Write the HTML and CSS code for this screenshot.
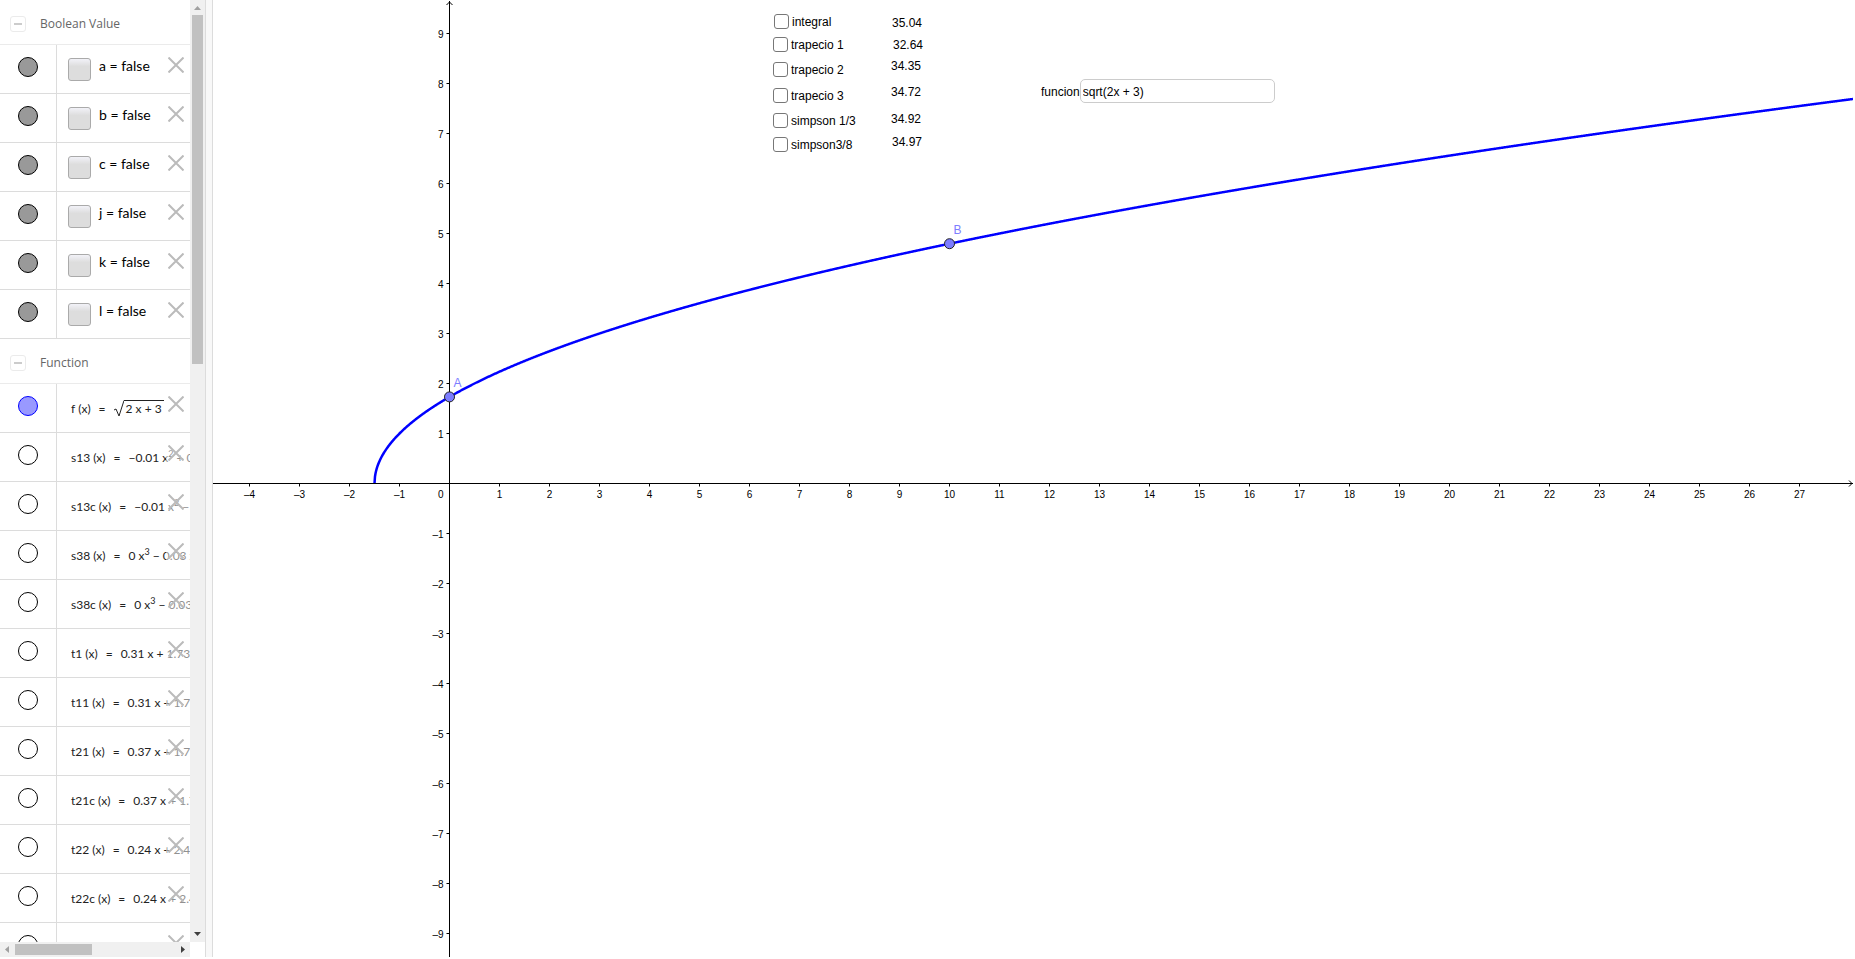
FILE: index.html
```html
<!DOCTYPE html>
<html lang="en">
<head>
  <meta charset="UTF-8">
  <meta name="viewport" content="width=device-width, initial-scale=1.0">
  <title>Integration methods</title>
  <link rel="stylesheet" href="styles.css">
</head>
<body>
  <div class="app">

    <!-- Algebra view -->
    <aside class="algebra">
      <div class="algebra-list">
        <section>
          <h2 class="group-title"><button type="button" class="collapse" aria-label="Collapse Boolean Value"></button>Boolean Value</h2>
          <ul class="rows" id="booleanRows"></ul>
        </section>
        <section>
          <h2 class="group-title"><button type="button" class="collapse" aria-label="Collapse Function"></button>Function</h2>
          <ul class="rows" id="functionRows"></ul>
        </section>
      </div>
      <div class="scroll scroll-y">
        <svg class="arrow" viewBox="0 0 15 15"><path d="M4 10h7L7.500 6z" fill="#a0a0a0"/></svg>
        <div class="thumb"></div>
        <svg class="arrow" viewBox="0 0 15 15"><path d="M4 5h7L7.500 9z" fill="#404040"/></svg>
      </div>
      <div class="scroll scroll-x">
        <svg class="arrow" viewBox="0 0 15 15"><path d="M9 4v7L5 7.500z" fill="#a0a0a0"/></svg>
        <div class="thumb"></div>
        <svg class="arrow" viewBox="0 0 15 15"><path d="M6 4v7L10 7.500z" fill="#404040"/></svg>
      </div>
    </aside>

    <div class="splitter"></div>

    <!-- Graphics view -->
    <main class="graphics">
      <svg class="plot" id="plot"></svg>

      <label class="check check-integral"><input type="checkbox">integral</label>
      <label class="check check-trapecio1"><input type="checkbox">trapecio 1</label>
      <label class="check check-trapecio2"><input type="checkbox">trapecio 2</label>
      <label class="check check-trapecio3"><input type="checkbox">trapecio 3</label>
      <label class="check check-simpson13"><input type="checkbox">simpson 1/3</label>
      <label class="check check-simpson38"><input type="checkbox">simpson3/8</label>

      <span class="value value-integral">35.04</span>
      <span class="value value-trapecio1">32.64</span>
      <span class="value value-trapecio2">34.35</span>
      <span class="value value-trapecio3">34.72</span>
      <span class="value value-simpson13">34.92</span>
      <span class="value value-simpson38">34.97</span>

      <div class="function-box">
        <label for="funcion">funcion</label>
        <input type="text" id="funcion" value="sqrt(2x + 3)">
      </div>
    </main>
  </div>

  <script src="script.js"></script>
</body>
</html>
```
FILE: styles.css
```css
body {
  margin: 0;
  background: #fff;
  font-family: "Liberation Sans", Arial, sans-serif;
  font-size: 12px;
  color: #000;
}

.app {
  display: flex;
  height: 100vh;
  box-sizing: border-box;
  padding: 0 2px 2px 0;
  overflow: hidden;
}

/* Algebra view */
.algebra {
  flex: none;
  display: grid;
  grid-template-columns: 190px 15px;
  grid-template-rows: minmax(0, 1fr) 15px;
}

.algebra-list {
  overflow: hidden;
}

.group-title {
  display: flex;
  align-items: center;
  gap: 14px;
  height: 45px;
  margin: 0;
  padding: 4px 0 0 10px;
  box-sizing: border-box;
  border-bottom: 1px solid #ebebeb;
  font: 12px/18px "Open Sans", sans-serif;
  color: #666;
}

.collapse {
  display: grid;
  place-items: center;
  width: 16px;
  height: 16px;
  padding: 0;
  border: 1px solid #ebebeb;
  border-radius: 3px;
  background: #fff;
}

.collapse::before {
  content: "";
  width: 8px;
  height: 2px;
  background: #ccc;
}

.rows {
  margin: 0;
  padding: 0;
  list-style: none;
}

.row {
  position: relative;
  display: flex;
  height: 48px;
  border-bottom: 1px solid #dcdcdc;
  overflow: hidden;
}

.marble-cell {
  flex: none;
  width: 56px;
  border-right: 1px solid #dcdcdc;
}

.marble {
  display: block;
  width: 20px;
  height: 20px;
  margin: 12px 18px;
  padding: 0;
  border: 1px solid #000;
  border-radius: 50%;
  background: #fff;
}

.marble-on {
  background: #999;
}

.marble-blue {
  border-color: #00f;
  background: #9999ff;
}

.bool {
  display: flex;
  gap: 8px;
  padding: 12px 0 0 11px;
  font: 14px/18px Lato, sans-serif;
  white-space: nowrap;
}

.bool input {
  appearance: none;
  width: 23px;
  height: 23px;
  margin: 1px 0 0;
  border: 1px solid #aaa;
  border-radius: 3px;
  background: linear-gradient(#f2f2f8, #ddd 35%);
}

.formula {
  display: flex;
  padding: 16px 0 0 14px;
  font: 12px/18px Lato, sans-serif;
  color: #222;
  white-space: pre;
}

.formula .arg {
  margin-left: 3px;
}

.formula .eq {
  margin: 0 8px;
}

.formula sup {
  font-size: 9px;
  line-height: 0;
}

.root {
  display: flex;
}

.root svg {
  width: 10px;
  height: 17px;
}

.radicand {
  height: 16px;
  padding: 0 2px;
  border-top: 1px solid #222;
  line-height: 16px;
}

.delete {
  position: absolute;
  top: 0;
  right: 0;
  display: flex;
  width: 24px;
  height: 48px;
  padding: 12px 0 0 2px;
  border: 0;
  background: rgba(255, 255, 255, 0.5);
}

.delete svg {
  width: 16px;
  height: 16px;
}

.scroll {
  display: flex;
  background: #f0f0f0;
}

.scroll-y {
  flex-direction: column;
}

.arrow {
  flex: none;
  width: 15px;
  height: 15px;
}

.thumb {
  background: #c1c1c1;
}

.scroll-y .thumb {
  height: 37%;
  margin: 0 2px;
}

.scroll-x .thumb {
  width: 77px;
  margin: 2px 0;
}

.scroll .arrow:last-child {
  margin: auto 0 0 auto;
}

.splitter {
  flex: none;
  width: 6px;
  border: solid #dcdcdc;
  border-width: 0 1px;
  background: #f8f8f8;
}

/* Graphics view */
.graphics {
  position: relative;
  flex: 1;
  min-width: 0;
}

.plot {
  display: block;
  width: 100%;
  height: 100%;
}

.axis {
  fill: none;
  stroke: #000;
  stroke-width: 1;
}

.curve {
  fill: none;
  stroke: #00f;
  stroke-width: 2.5;
}

.tick-label {
  font-size: 10px;
  fill: #000;
}

.point {
  fill: #7d7dff;
  stroke: #222;
}

.point-label {
  fill: #7d7dff;
}

/* Objects placed freely on the graphics canvas */
.check,
.value,
.function-box {
  position: absolute;
  display: flex;
  align-items: center;
  height: 16px;
}

.check {
  left: 560px;
  height: 15px;
  gap: 3px;
}

.check input {
  appearance: none;
  width: 15px;
  height: 15px;
  box-sizing: border-box;
  margin: 0;
  border: 1px solid #777;
  border-radius: 3px;
  background: #fff;
}

.check-integral { left: 561px; top: 14px; }
.check-trapecio1 { top: 37px; }
.check-trapecio2 { top: 62px; }
.check-trapecio3 { top: 88px; }
.check-simpson13 { top: 113px; }
.check-simpson38 { top: 137px; }

.value { left: 678px; }

.value-integral { left: 679px; top: 15px; }
.value-trapecio1 { left: 680px; top: 37px; }
.value-trapecio2 { top: 58px; }
.value-trapecio3 { top: 84px; }
.value-simpson13 { top: 111px; }
.value-simpson38 { left: 679px; top: 134px; }

.function-box {
  left: 828px;
  top: 79px;
  height: 24px;
}

.function-box label {
  padding-top: 2px;
}

.function-box input {
  width: 195px;
  height: 24px;
  box-sizing: border-box;
  padding: 2px 2px 0;
  border: 1px solid #ccc;
  border-radius: 5px;
  font: 12px "Liberation Sans", Arial, sans-serif;
  color: #000;
}
```
FILE: script.js
```js
const booleans = ['a', 'b', 'c', 'j', 'k', 'l'];

const root = '<span class="root"><svg viewBox="0 0 10 17"><path d="M0 10l2-1 3 7L10 .5" fill="none" stroke="#222"/></svg><span class="radicand">2 x + 3</span></span>';

const functions = [
  ['f', root],
  ['s13', '−0.01 x<sup>2</sup> + 0.37 x'],
  ['s13c', '−0.01 x<sup>2</sup> − 0.37 x'],
  ['s38', '0 x<sup>3</sup> − 0.03 x'],
  ['s38c', '0 x<sup>3</sup> − 0.03 x'],
  ['t1', '0.31 x + 1.73'],
  ['t11', '0.31 x + 1.73'],
  ['t21', '0.37 x + 1.73'],
  ['t21c', '0.37 x + 1.73'],
  ['t22', '0.24 x + 2.4'],
  ['t22c', '0.24 x + 2.4'],
  ['t31', '0.41 x + 1.73'],
];

const deleteButton = '<button type="button" class="delete" aria-label="Delete"><svg viewBox="0 0 16 16"><path d="M0.500 0.500l15 15M15.500 0.500l-15 15" stroke="#bbb" stroke-width="2"/></svg></button>';

const row = (marble, content) => `
  <li class="row">
    <div class="marble-cell"><button type="button" class="marble ${marble}" aria-label="Show or hide"></button></div>
    ${content}
    ${deleteButton}
  </li>`;

document.getElementById('booleanRows').innerHTML = booleans.map(name =>
  row('marble-on', `<label class="bool"><input type="checkbox"><span>${name} = false</span></label>`)
).join('');

document.getElementById('functionRows').innerHTML = functions.map(([name, body]) =>
  row(name === 'f' ? 'marble-blue' : '',
    `<div class="formula"><span>${name}</span><span class="arg">(x)</span><span class="eq">=</span><span>${body}</span></div>`)
).join('');

// Graph: one unit is 50px, the origin is at (236, 483)
const unit = 50;
const originX = 236;
const originY = 483;
const plot = document.getElementById('plot');

const drawPlot = () => {
  const width = plot.clientWidth;
  const height = plot.clientHeight;
  const ax = originX + 0.5;
  const ay = originY + 0.5;
  const toX = x => ax + x * unit;
  const toY = y => ay - y * unit;
  const f = x => Math.sqrt(2 * x + 3);
  let svg = '';

  // Curve
  let points = '';
  for (let px = toX(-1.5); px <= width; px += 0.5) {
    points += `${px},${toY(f((px - ax) / unit))} `;
  }
  svg += `<polyline class="curve" points="${points}"/>`;

  // Axes with arrow heads
  svg += `<path class="axis" d="M0 ${ay}H${width}M${width - 4} ${ay - 3}l3 3l-3 3M${ax} 1V${height}M${ax - 3} 5l3 -3l3 3"/>`;

  for (let i = Math.ceil(-originX / unit); toX(i) < width - 20; i++) {
    if (i === 0) continue;
    svg += `<path class="axis" d="M${toX(i)} ${ay}v3"/>`;
    svg += `<text class="tick-label" text-anchor="middle" x="${toX(i)}" y="${ay + 14}">${String(i).replace('-', '–')}</text>`;
  }
  svg += `<text class="tick-label" text-anchor="end" x="${ax - 6}" y="${ay + 14}">0</text>`;

  for (let i = Math.ceil((originY - height) / unit); toY(i) > 10; i++) {
    if (i === 0) continue;
    svg += `<path class="axis" d="M${ax} ${toY(i)}h-3"/>`;
    svg += `<text class="tick-label" text-anchor="end" x="${ax - 6}" y="${toY(i) + 4}">${String(i).replace('-', '–')}</text>`;
  }

  // Points on the curve
  [['A', 0], ['B', 10]].forEach(([label, x]) => {
    svg += `<circle class="point" cx="${toX(x)}" cy="${toY(f(x))}" r="5"/>`;
    svg += `<text class="point-label" x="${toX(x) + 4}" y="${toY(f(x)) - 10}">${label}</text>`;
  });

  plot.innerHTML = svg;
};

window.addEventListener('resize', drawPlot);
drawPlot();
```
